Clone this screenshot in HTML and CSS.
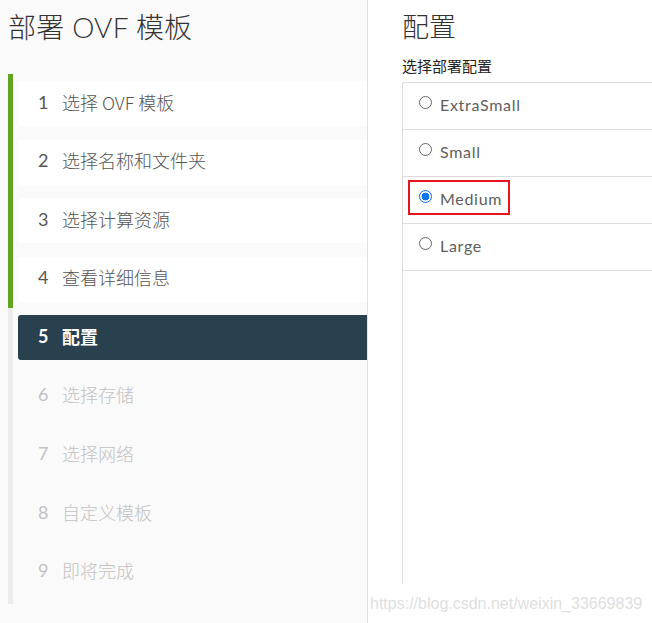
FILE: index.html
```html
<!DOCTYPE html>
<html lang="zh-CN">
<head>
<meta charset="utf-8">
<title>部署 OVF 模板</title>
<link rel="stylesheet" href="styles.css">
</head>
<body>
<div class="wizard">
  <aside class="sidebar">
    <h1 class="wiz-title">部署 OVF 模板</h1>
    <ol class="steps">
      <li class="step done"><div class="card"><span class="num">1</span><span class="label">选择 OVF 模板</span></div></li>
      <li class="step done"><div class="card"><span class="num">2</span><span class="label">选择名称和文件夹</span></div></li>
      <li class="step done"><div class="card"><span class="num">3</span><span class="label">选择计算资源</span></div></li>
      <li class="step done"><div class="card"><span class="num">4</span><span class="label">查看详细信息</span></div></li>
      <li class="step active"><div class="card"><span class="num">5</span><span class="label">配置</span></div></li>
      <li class="step todo"><div class="card"><span class="num">6</span><span class="label">选择存储</span></div></li>
      <li class="step todo"><div class="card"><span class="num">7</span><span class="label">选择网络</span></div></li>
      <li class="step todo"><div class="card"><span class="num">8</span><span class="label">自定义模板</span></div></li>
      <li class="step todo last"><div class="card"><span class="num">9</span><span class="label">即将完成</span></div></li>
    </ol>
  </aside>
  <main class="content">
    <h2 class="page-title">配置</h2>
    <div class="field-label">选择部署配置</div>
    <div class="options">
      <div class="opt-row"><label class="opt"><span class="radio"></span><span class="opt-text">ExtraSmall</span></label></div>
      <div class="opt-row"><label class="opt"><span class="radio"></span><span class="opt-text">Small</span></label></div>
      <div class="opt-row"><label class="opt highlight"><span class="radio checked"></span><span class="opt-text">Medium</span></label></div>
      <div class="opt-row"><label class="opt"><span class="radio"></span><span class="opt-text">Large</span></label></div>
      <div class="opt-rest"></div>
    </div>
  </main>
  <div class="watermark">https://blog.csdn.net/weixin_33669839</div>
</div>
</body>
</html>
```
FILE: styles.css
```css
* { box-sizing: border-box; }
html, body { margin: 0; padding: 0; background: #ffffff; }
body {
  font-family: "Lato", "Noto Sans CJK SC", sans-serif;
  color: #333;
  width: 652px;
  height: 623px;
  overflow: hidden;
}
.wizard {
  display: flex;
  height: 623px;
  position: relative;
}
.sidebar {
  width: 368px;
  flex: 0 0 368px;
  background: #fafafa;
  border-right: 1px solid #e2e2e2;
}
.wiz-title {
  margin: 13px 0 0 8px;
  height: 28px;
  font-size: 28px;
  line-height: 28px;
  font-weight: 300;
  color: #333;
  font-family: "Lato", "Noto Sans CJK SC", sans-serif;
  letter-spacing: 0.2px;
}
.steps {
  list-style: none;
  margin: 33px 0 0 8px;
  padding: 0;
}
.step {
  height: 58.6px;
  border-left: 5px solid #ececec;
  padding: 7px 0 6.6px 5px;
}
.step.last { height: 61px; padding-bottom: 9px; }
.step.done { border-left-color: #62a420; }
.card {
  height: 45px;
  display: flex;
  align-items: center;
  padding-left: 20px;
  padding-bottom: 4px;
  border-radius: 3px 0 0 3px;
  font-size: 18px;
  color: #565656;
}
.step.done .card { background: #ffffff; }
.step.active .card { background: #29414e; color: #ffffff; font-weight: 700; }
.step.todo .card { color: #c2c2c2; }
.num {
  width: 24px;
  font-family: "Lato", sans-serif;
  font-size: 18px;
}
.label {
  font-family: "Noto Sans CJK SC", sans-serif;
  font-size: 18px;
  font-weight: 300;
}
.step.active .label { font-weight: 700; }

.content {
  flex: 1;
  min-width: 0;
  padding-left: 34px;
  display: flex;
  flex-direction: column;
  overflow: hidden;
}
.page-title {
  margin: 11px 0 0 0;
  height: 30px;
  font-size: 27px;
  line-height: 30px;
  font-weight: 300;
  font-family: "Noto Sans CJK SC", sans-serif;
  color: #333;
}
.field-label {
  margin-top: 15px;
  height: 20px;
  font-size: 15px;
  line-height: 20px;
  font-family: "Noto Sans CJK SC", sans-serif;
  color: #222;
}
.options {
  margin-top: 6px;
  border-left: 1px solid #dcdcdc;
  border-top: 1px solid #dcdcdc;
  border-top-left-radius: 3px;
  display: flex;
  flex-direction: column;
}
.opt-row {
  height: 47px;
  border-bottom: 1px solid #dcdcdc;
}
.opt-rest { height: 313px; }
.opt {
  display: inline-flex;
  align-items: center;
  margin: 3px 0 0 5px;
  height: 35px;
  padding: 0 6px 0 9px;
  border: 2px solid transparent;
  font-size: 16px;
  color: #5e5e5e;
  font-family: "Lato", sans-serif;
}
.opt.highlight { border-color: #e8141b; }
.radio {
  width: 13px;
  height: 13px;
  border: 1px solid #666;
  border-radius: 50%;
  margin-right: 8px;
  margin-top: -3px;
  background: #fff;
  flex: 0 0 13px;
}
.radio.checked {
  border: 1px solid #0b6ce0;
  background: radial-gradient(circle, #0a74f0 0 3.6px, #fff 4.2px);
}
.opt-text { letter-spacing: 0.7px; padding-top: 2px; }
.watermark {
  position: absolute;
  left: 370px;
  top: 595px;
  font-family: "Liberation Sans", sans-serif;
  font-size: 16px;
  color: #dedede;
  white-space: nowrap;
}
```
